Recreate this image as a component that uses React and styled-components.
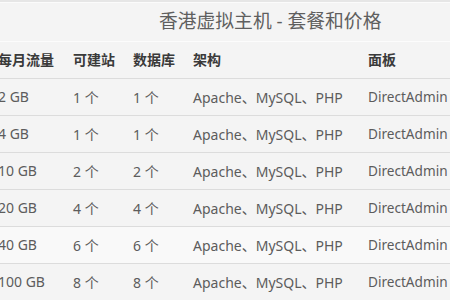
import { createGlobalStyle, styled } from "styled-components";

const GlobalStyle = createGlobalStyle`
  html, body {
    margin: 0;
    padding: 0;
    background: #f4f4f4;
    overflow: hidden;
  }
  body {
    font-family: "Noto Sans", "Noto Sans CJK SC", sans-serif;
  }
`

const Page = styled.div`
  width: 450px;
  height: 300px;
  overflow: hidden;
  background: #f4f4f4;
  border-top: 2px solid #e6e6e6;
  box-sizing: border-box;
`

const Table = styled.table`
  border-collapse: collapse;
  margin-left: -2px;
  table-layout: fixed;
  width: 560px;
`

const Caption = styled.caption`
  height: 38px;
  line-height: 36px;
  font-size: 18.8px;
  color: #5f5f5f;
  text-align: left;
  padding-left: 161px;
  border-top: 1px solid #fbfbfb;
  white-space: nowrap;
`

const Row = styled.tr`
  height: 37px;
  background: ${(p) => (p.$light ? "#f9f9f9" : "#f4f4f4")};
  border-bottom: 1px solid #dcdcdc;
  box-shadow: inset 0 1px 0 #fcfcfc;
`

const HeadCell = styled.th`
  padding: 0;
  text-align: left;
  font-size: 14px;
  font-weight: 700;
  color: #3a3a3a;
  width: ${(p) => p.$w}px;
  padding-bottom: 1px;
`

const Cell = styled.td`
  padding: 0;
  font-size: ${(p) => (p.$narrow ? "13.6px" : "14px")};
  color: #5c5c5c;
  white-space: nowrap;
`

const columns = [
  { label: "每月流量", w: 75 },
  { label: "可建站", w: 60 },
  { label: "数据库", w: 60 },
  { label: "架构", w: 175 },
  { label: "面板", w: 190 },
]

const plans = [
  ["2 GB", "1 个", "1 个"],
  ["4 GB", "1 个", "1 个"],
  ["10 GB", "2 个", "2 个"],
  ["20 GB", "4 个", "4 个"],
  ["40 GB", "6 个", "6 个"],
  ["100 GB", "8 个", "8 个"],
]

function App() {
  return (
    <>
      <GlobalStyle />
      <Page>
        <Table>
          <Caption>香港虚拟主机 - 套餐和价格</Caption>
          <thead>
            <Row>
              {columns.map((c) => (
                <HeadCell key={c.label} $w={c.w}>{c.label}</HeadCell>
              ))}
            </Row>
          </thead>
          <tbody>
            {plans.map((p, i) => (
              <Row key={p[0]} $light={i === 4}>
                <Cell>{p[0]}</Cell>
                <Cell>{p[1]}</Cell>
                <Cell>{p[2]}</Cell>
                <Cell>Apache、MySQL、PHP</Cell>
                <Cell $narrow>DirectAdmin</Cell>
              </Row>
            ))}
          </tbody>
        </Table>
      </Page>
    </>
  );
}

export default App;
